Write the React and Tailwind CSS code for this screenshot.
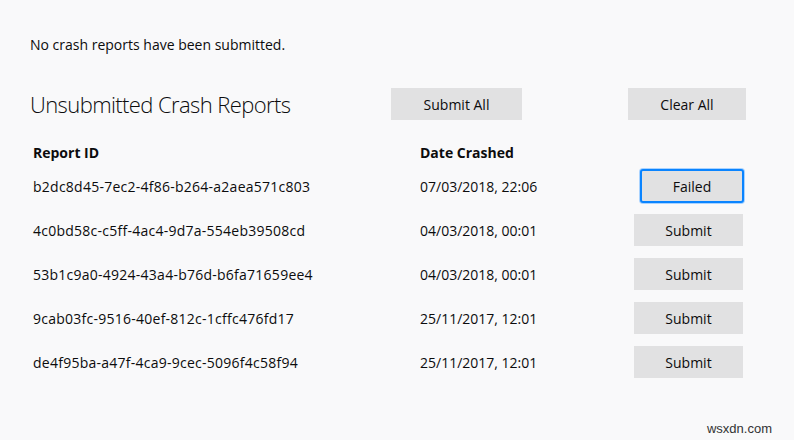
export default function App() {
  const rows = [
    ["4c0bd58c-c5ff-4ac4-9d7a-554eb39508cd", "04/03/2018, 00:01"],
    ["53b1c9a0-4924-43a4-b76d-b6fa71659ee4", "04/03/2018, 00:01"],
    ["9cab03fc-9516-40ef-812c-1cffc476fd17", "25/11/2017, 12:01"],
    ["de4f95ba-a47f-4ca9-9cec-5096f4c58f94", "25/11/2017, 12:01"],
  ];
  return (
    <div className="relative w-[794px] h-[440px] bg-[#f9f9fa] text-[#0c0c0d] overflow-hidden" style={{ fontFamily: '"Open Sans", "Noto Sans", sans-serif' }}>
      <div className="pl-[30px] pt-[35px]">
        <p className="text-[14px] leading-[20px]">No crash reports have been submitted.</p>
        <div className="flex items-center mt-[33px] h-[32px]">
          <h2 className="w-[361px] text-[22px] font-light leading-[32px] tracking-[-0.6px]">Unsubmitted Crash Reports</h2>
          <button className="w-[131px] h-[32px] bg-[#e1e1e2] text-[14px]">Submit All</button>
          <button className="ml-[106px] w-[118px] h-[32px] bg-[#e1e1e2] text-[14px]">Clear All</button>
        </div>
        <div className="mt-[20px] pl-[3px] grid grid-cols-[387px_214px_112px] text-[14px]">
          <div className="h-[24px] flex items-center font-bold">Report ID</div>
          <div className="h-[24px] flex items-center font-bold">Date Crashed</div>
          <div className="h-[24px]" />
          <div className="h-[44px] flex items-center tracking-[0.25px]">b2dc8d45-7ec2-4f86-b264-a2aea571c803</div>
          <div className="h-[44px] flex items-center">07/03/2018, 22:06</div>
          <div className="h-[44px] flex items-center">
            <button className="ml-[6px] w-[104px] h-[34px] bg-[#e1e1e2] border-2 border-[#0a84ff] rounded-[3px] shadow-[0_0_0_1px_#a9d3ff]">Failed</button>
          </div>
          {rows.map(([id, d]) => (
            <>
              <div key={id + "a"} className="h-[44px] flex items-center tracking-[0.25px]">{id}</div>
              <div key={id + "b"} className="h-[44px] flex items-center">{d}</div>
              <div key={id + "c"} className="h-[44px] flex items-center">
                <button className="w-[109px] h-[32px] bg-[#e1e1e2]">Submit</button>
              </div>
            </>
          ))}
        </div>
      </div>
      <div className="absolute right-[22px] bottom-[2px] text-[13px] text-[#333]" style={{ fontFamily: '"Liberation Sans", Arial, sans-serif' }}>wsxdn.com</div>
    </div>
  );
}
